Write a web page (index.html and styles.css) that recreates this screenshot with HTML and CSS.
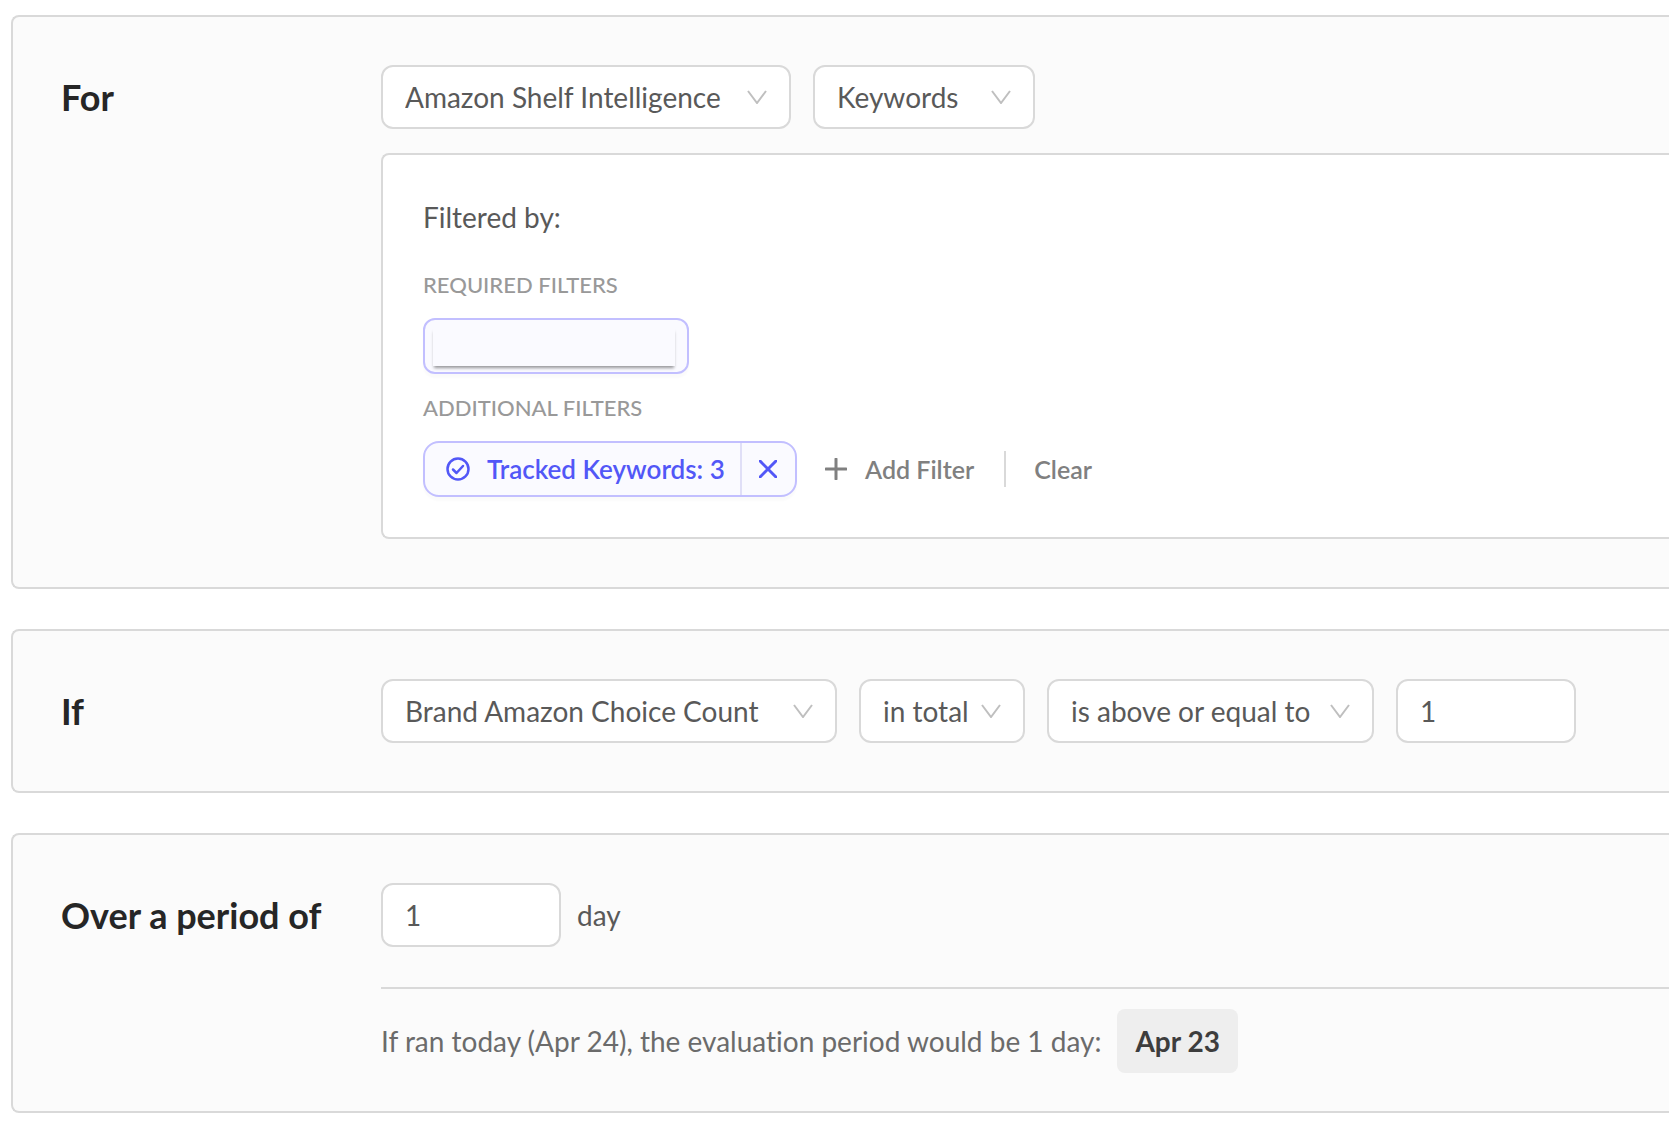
FILE: index.html
```html
<!DOCTYPE html>
<html lang="en">
<head>
    <meta charset="UTF-8">
    <meta name="viewport" content="width=device-width, initial-scale=1.0">
    <title>Alert rule</title>
    <link rel="stylesheet" href="styles.css">
</head>
<body>
    <form class="rule">
        <section class="card">
            <h2 class="card-title">For</h2>
            <div class="card-body">
                <div class="controls">
                    <div class="select select-source">
                        <select aria-label="Data source">
                            <option>Amazon Shelf Intelligence</option>
                        </select>
                        <svg class="chevron" viewBox="0 0 20 14"><path d="M1 1l9 12 9-12"/></svg>
                    </div>
                    <div class="select select-entity">
                        <select aria-label="Entity">
                            <option>Keywords</option>
                        </select>
                        <svg class="chevron" viewBox="0 0 20 14"><path d="M1 1l9 12 9-12"/></svg>
                    </div>
                </div>

                <div class="filters">
                    <p class="filters-title">Filtered by:</p>

                    <h3 class="filters-label">Required Filters</h3>
                    <button type="button" class="chip chip-required" aria-label="Required filter">
                        <span class="chip-value"></span>
                    </button>

                    <h3 class="filters-label">Additional Filters</h3>
                    <div class="filter-row">
                        <div class="chip">
                            <button type="button" class="chip-main">
                                <svg class="icon-check" viewBox="0 0 48 48"><circle cx="24" cy="24" r="21"/><path d="M14 25l7 7 13-14"/></svg>
                                Tracked Keywords: 3
                            </button>
                            <button type="button" class="chip-remove" aria-label="Remove filter">
                                <svg class="icon-close" viewBox="0 0 18 18"><path d="M1 1l16 16M17 1L1 17"/></svg>
                            </button>
                        </div>
                        <button type="button" class="link-btn add-btn">
                            <svg class="icon-plus" viewBox="0 0 22 22"><path d="M11 1v20M1 11h20"/></svg>
                            Add Filter
                        </button>
                        <span class="separator"></span>
                        <button type="button" class="link-btn">Clear</button>
                    </div>
                </div>
            </div>
        </section>

        <section class="card">
            <h2 class="card-title">If</h2>
            <div class="card-body">
                <div class="controls">
                    <div class="select select-metric">
                        <select aria-label="Metric">
                            <option>Brand Amazon Choice Count</option>
                        </select>
                        <svg class="chevron" viewBox="0 0 20 14"><path d="M1 1l9 12 9-12"/></svg>
                    </div>
                    <div class="select select-aggregate">
                        <select aria-label="Aggregation">
                            <option>in total</option>
                        </select>
                        <svg class="chevron" viewBox="0 0 20 14"><path d="M1 1l9 12 9-12"/></svg>
                    </div>
                    <div class="select select-operator">
                        <select aria-label="Operator">
                            <option>is above or equal to</option>
                        </select>
                        <svg class="chevron" viewBox="0 0 20 14"><path d="M1 1l9 12 9-12"/></svg>
                    </div>
                    <input type="text" class="number" value="1" aria-label="Threshold">
                </div>
            </div>
        </section>

        <section class="card card-period">
            <h2 class="card-title">Over a period of</h2>
            <div class="card-body">
                <div class="period">
                    <input type="text" class="number" id="period" value="1">
                    <label for="period">day</label>
                </div>
                <div class="preview">
                    <span>If ran today (Apr 24), the evaluation period would be 1 day:</span>
                    <strong class="date">Apr 23</strong>
                </div>
            </div>
        </section>
    </form>
</body>
</html>
```
FILE: styles.css
```css
* {
    margin: 0;
    padding: 0;
    box-sizing: border-box;
}

body {
    font-family: Lato, 'Liberation Sans', sans-serif;
    font-size: 28px;
    line-height: 44px;
    font-variant-ligatures: none;
    color: #595959;
    background: #fff;
}

button,
input,
select {
    font: inherit;
    color: inherit;
}

button {
    border: none;
    background: none;
    cursor: pointer;
}

svg {
    fill: none;
    stroke: currentColor;
    stroke-width: 2;
    flex: none;
}

.rule {
    display: flex;
    flex-direction: column;
    gap: 40px;
    padding: 15px 0 12px 11px;
}

/* cards run off the right edge of the window */
.card {
    display: flex;
    padding: 48px 0 48px 48px;
    border: 2px solid #d9d9d9;
    border-right: none;
    border-radius: 8px 0 0 8px;
    background: #fbfbfb;
}

.card-period {
    padding-bottom: 38px;
}

.card-title {
    flex: none;
    width: 320px;
    font-size: 36px;
    font-weight: 700;
    line-height: 64px;
    color: #262626;
}

.card-body {
    flex: 1;
    min-width: 0;
}

.controls {
    display: flex;
    gap: 22px;
}

.select {
    position: relative;
}

.select select,
.number {
    display: block;
    width: 100%;
    height: 64px;
    padding: 0 22px;
    border: 2px solid #d9d9d9;
    border-radius: 12px;
    background: #fff;
    appearance: none;
}

.select .chevron {
    position: absolute;
    top: 25px;
    right: 24px;
    width: 20px;
    height: 14px;
    color: #bfbfbf;
    pointer-events: none;
}

.select-source {
    width: 410px;
}

.select-entity {
    width: 222px;
}

.select-metric {
    width: 456px;
}

.select-aggregate {
    width: 166px;
}

.select-operator {
    width: 327px;
}

.controls .number,
.period .number {
    width: 180px;
}

.filters {
    margin-top: 24px;
    padding: 40px 0 40px 40px;
    border: 2px solid #d9d9d9;
    border-right: none;
    border-radius: 8px 0 0 8px;
    background: #fff;
}

.filters-title {
    margin-bottom: 32px;
}

.filters-label {
    margin-bottom: 20px;
    font-size: 22px;
    font-weight: 500;
    line-height: 27px;
    text-transform: uppercase;
    color: #999;
}

.filter-row {
    display: flex;
    align-items: center;
}

.chip {
    display: flex;
    height: 56px;
    border: 2px solid #c2bfff;
    border-radius: 16px;
    background: #fafaff;
    box-shadow: 0 4px 2px rgba(0, 0, 0, 0.02);
    font-size: 26px;
    font-weight: 600;
    color: #5257f7;
}

.chip-required {
    width: 266px;
    margin-bottom: 20px;
    padding: 8px 12px 6px 8px;
    border-radius: 12px;
}

.chip-value {
    flex: 1;
    align-self: stretch;
    background: #fafaff;
    box-shadow: 0 3px 3px -1px rgba(0, 0, 0, 0.4);
}

.chip-main {
    display: flex;
    align-items: center;
    gap: 17px;
    width: 315px;
    padding-left: 21px;
    white-space: nowrap;
}

.chip-remove {
    display: flex;
    align-items: center;
    justify-content: center;
    width: 55px;
    padding-right: 2px;
    border-left: 2px solid #e0dff7;
}

.icon-check {
    width: 24px;
    height: 24px;
    stroke-width: 5;
    stroke-linecap: round;
    stroke-linejoin: round;
}

.icon-close {
    width: 18px;
    height: 18px;
    stroke-width: 3;
    stroke-linecap: round;
}

.icon-plus {
    width: 22px;
    height: 22px;
    stroke-width: 3;
    stroke-linecap: round;
}

.link-btn {
    font-size: 25px;
    font-weight: 600;
    color: #808080;
}

.add-btn {
    display: flex;
    align-items: center;
    gap: 18px;
    margin-left: 28px;
}

.separator {
    width: 2px;
    height: 36px;
    margin: 0 28px 0 30px;
    background: #d9d9d9;
}

.period {
    display: flex;
    align-items: center;
    gap: 16px;
    padding-bottom: 40px;
    border-bottom: 2px solid #d9d9d9;
}

.preview {
    display: flex;
    align-items: center;
    gap: 16px;
    margin-top: 20px;
    color: #6b6b6b;
}

.date {
    padding: 10px 18px;
    border-radius: 8px;
    background: #eee;
    font-weight: 700;
    color: #3d3d3d;
}
```
